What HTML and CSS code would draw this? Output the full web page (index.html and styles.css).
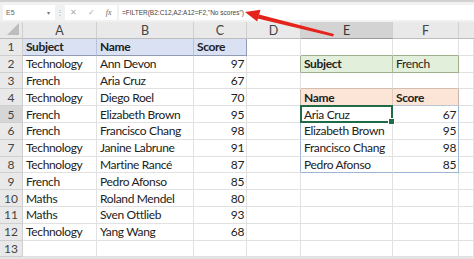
FILE: index.html
```html
<!DOCTYPE html>
<html>
<head>
<meta charset="utf-8">
<link rel="stylesheet" href="styles.css">
</head>
<body>
<div class="app">
  <div class="fbar">
    <div class="namebox"><span>E5</span><span class="dd">▾</span></div>
    <div class="sep">⋮</div>
    <div class="btns"><span class="x">✕</span><span class="ok">✓</span><span class="fx">fx</span></div>
    <div class="formula">=FILTER(B2:C12,A2:A12=F2,"No scores")</div>
  </div>
  <div class="sheet">
    <div class="corner"><span class="tri"></span></div>
    <div class="ch">A</div><div class="ch">B</div><div class="ch">C</div><div class="ch">D</div><div class="ch sel">E</div><div class="ch">F</div><div class="ch last"></div>

    <div class="rh">1</div><div class="c blue b">Subject</div><div class="c blue b">Name</div><div class="c blue b bl-r">Score</div><div class="c"></div><div class="c gtop"></div><div class="c gtop"></div><div class="c"></div>
    <div class="rh">2</div><div class="c">Technology</div><div class="c">Ann Devon</div><div class="c n">97</div><div class="c gleft"></div><div class="c green b gin">Subject</div><div class="c green gr">French</div><div class="c"></div>
    <div class="rh">3</div><div class="c">French</div><div class="c">Aria Cruz</div><div class="c n">67</div><div class="c"></div><div class="c otop"></div><div class="c otop"></div><div class="c"></div>
    <div class="rh">4</div><div class="c">Technology</div><div class="c">Diego Roel</div><div class="c n">70</div><div class="c oleft"></div><div class="c orange b oin">Name</div><div class="c orange b or">Score</div><div class="c"></div>
    <div class="rh hl">5</div><div class="c">French</div><div class="c">Elizabeth Brown</div><div class="c n">95</div><div class="c sleft"></div><div class="c cur">Aria Cruz</div><div class="c n sr">67</div><div class="c"></div>
    <div class="rh">6</div><div class="c">French</div><div class="c">Francisco Chang</div><div class="c n">98</div><div class="c sleft"></div><div class="c">Elizabeth Brown</div><div class="c n sr">95</div><div class="c"></div>
    <div class="rh">7</div><div class="c">Technology</div><div class="c">Janine Labrune</div><div class="c n">91</div><div class="c sleft"></div><div class="c">Francisco Chang</div><div class="c n sr">98</div><div class="c"></div>
    <div class="rh">8</div><div class="c">Technology</div><div class="c">Martine Rancé</div><div class="c n">87</div><div class="c sleft"></div><div class="c sb">Pedro Afonso</div><div class="c n sr sb">85</div><div class="c"></div>
    <div class="rh">9</div><div class="c">French</div><div class="c">Pedro Afonso</div><div class="c n">85</div><div class="c"></div><div class="c"></div><div class="c"></div><div class="c"></div>
    <div class="rh">10</div><div class="c">Maths</div><div class="c">Roland Mendel</div><div class="c n">80</div><div class="c"></div><div class="c"></div><div class="c"></div><div class="c"></div>
    <div class="rh">11</div><div class="c">Maths</div><div class="c">Sven Ottlieb</div><div class="c n">93</div><div class="c"></div><div class="c"></div><div class="c"></div><div class="c"></div>
    <div class="rh">12</div><div class="c">Technology</div><div class="c">Yang Wang</div><div class="c n">68</div><div class="c"></div><div class="c"></div><div class="c"></div><div class="c"></div>
    <div class="rh">13</div><div class="c"></div><div class="c"></div><div class="c"></div><div class="c"></div><div class="c"></div><div class="c"></div><div class="c"></div>
  </div>
  <svg class="arrow" width="474" height="60" viewBox="0 0 474 60">
    <path d="M333 36.5 L334 34 L259 14.5 L257.5 18.5 Z" fill="#e3231c"/>
    <polygon points="245,12 260.5,9.8 257.2,21.6" fill="#e3231c"/>
  </svg>
</div>
</body>
</html>
```

FILE: styles.css
```css
* { box-sizing: border-box; }
html, body { margin: 0; padding: 0; }
body {
  width: 474px;
  height: 259px;
  overflow: hidden;
  background: #e4e4e4;
  font-family: Lato, "Liberation Sans", sans-serif;
}
.app { position: relative; width: 474px; height: 259px; }

.fbar {
  height: 22px;
  display: flex;
  align-items: center;
  padding: 2px 0 1px 3px;
  background: #f1f1f1;
  border-top: 2px solid #d2d2d2;
  font-family: "Liberation Sans", sans-serif;
  font-size: 7px;
  color: #555;
}
.namebox {
  width: 52px;
  height: 15px;
  background: #fff;
  display: flex;
  align-items: center;
  justify-content: space-between;
  padding: 0 5px 0 3px;
  color: #666;
}
.namebox .dd { font-size: 6px; color: #777; }
.sep { width: 10px; text-align: center; color: #aaa; font-size: 8px; }
.btns {
  width: 52px;
  height: 15px;
  background: #fff;
  display: flex;
  align-items: center;
  justify-content: space-around;
  color: #aaa;
  font-size: 8px;
}
.btns .fx { font-style: italic; font-family: "Liberation Serif", serif; color: #666; }
.formula {
  flex: 1;
  height: 15px;
  margin-left: 2px;
  background: #fff;
  display: flex;
  align-items: center;
  padding-left: 3px;
  color: #444;
  font-size: 6.5px;
}

.sheet {
  display: grid;
  grid-template-columns: 23px 74px 97px 53px 54px 92px 66px 1fr;
  grid-template-rows: 17px repeat(13, 16.8px);
  background: #fff;
  font-size: 12px;
  letter-spacing: -0.35px;
  color: #222;
}
.corner, .ch, .rh {
  background: #e9e9e9;
  color: #444;
  border-right: 1px solid #cfcfcf;
  border-bottom: 1px solid #cfcfcf;
  display: flex;
  align-items: center;
  justify-content: center;
  letter-spacing: 0;
}
.corner { position: relative; border-bottom-color: #bdbdbd; }
.tri {
  position: absolute;
  right: 3px;
  bottom: 3px;
  width: 0; height: 0;
  border-left: 12px solid transparent;
  border-bottom: 12px solid #bdbdbd;
}
.ch { font-size: 12.5px; border-bottom-color: #bdbdbd; }
.ch.sel { background: #d3d3d3; border-bottom: 1px solid #9a9a9a; color: #333; }
.ch.last { border-right: none; }
.rh { font-size: 12px; }
.rh.hl { background: #d6d6d6; }

.c {
  border-right: 1px solid #e1e1e1;
  border-bottom: 1px solid #e1e1e1;
  padding: 0 3px;
  display: flex;
  align-items: center;
  white-space: nowrap;
  overflow: visible;
  position: relative;
}
.n { justify-content: flex-end; padding-right: 2px; }
.b { font-weight: bold; }

.blue { background: #d9e1f2; border-bottom-color: #8f9bb3; border-right-color: #b7c3da; }
.blue.bl-r { border-right-color: #8f9bb3; }

.gtop { border-bottom-color: #9fae8f; }
.gleft { border-right-color: #9fae8f; }
.green { background: #e2efda; border-bottom-color: #9fae8f; }
.green.gin { border-right-color: #a9b99a; }
.green.gr { border-right-color: #9fae8f; }

.otop { border-bottom-color: #d2beb2; }
.oleft { border-right-color: #c9b5a9; }
.orange { background: #fce4d6; border-bottom-color: #b9c7d8; }
.orange.oin { border-right-color: #e0cabd; }
.orange.or { border-right-color: #c9b5a9; }

.sleft { border-right-color: #9db6d6; }
.sr { border-right-color: #9db6d6; }
.sb { border-bottom-color: #9db6d6; }

.cur::after {
  content: "";
  position: absolute;
  left: -1px; top: -1px; right: -1px; bottom: -1px;
  border: 2px solid #1f6b45;
}
.cur::before {
  content: "";
  position: absolute;
  right: -3px; bottom: -3px;
  width: 5px; height: 5px;
  background: #1f6b45;
  border: 1px solid #fff;
  z-index: 2;
}

.arrow { position: absolute; left: 0; top: 0; pointer-events: none; }
```
